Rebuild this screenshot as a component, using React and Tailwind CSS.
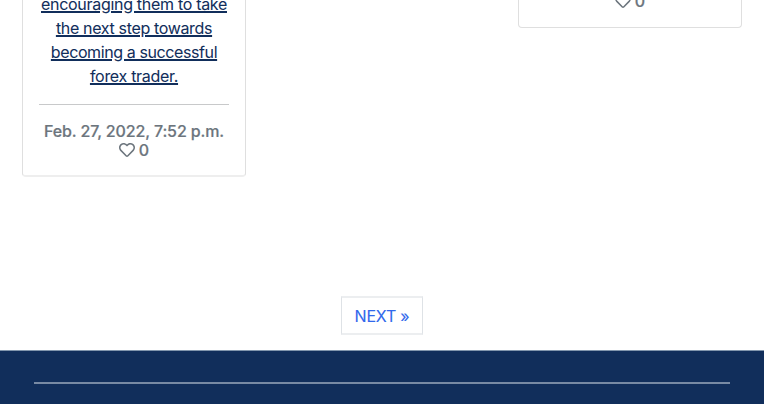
import { FaRegHeart } from "react-icons/fa";

function Likes() {
  return (
    <div className="flex h-[19px] items-center justify-center gap-1">
      <FaRegHeart className="mb-px size-4" />
      <span>0</span>
    </div>
  );
}

const excerpt = [
  { text: "encouraging them to take", spacing: "tracking-[-0.3px]" },
  { text: "the next step towards", spacing: "tracking-[-0.34px]" },
  { text: "becoming a successful", spacing: "tracking-[-0.4px]" },
  { text: "forex trader.", spacing: "tracking-[-0.3px]" },
];

export default function App() {
  return (
    <div className="flex h-[404px] w-[764px] flex-col overflow-hidden bg-white font-['Inter',sans-serif] text-base">
      <main className="flex h-[350px] shrink-0 flex-col items-center">
        <div className="flex h-[296px] w-full shrink-0 items-start justify-between px-[22px]">
          <article className="flex h-[177px] w-[224px] flex-col justify-end rounded-b border border-t-0 border-b-2 border-[#dfdfdf] border-b-[#eeeeee] px-4 pb-[15px] text-center">
            <p className="flex flex-col items-center leading-6 text-[#112e5b]">
              {excerpt.map((line) => (
                <span key={line.text} className={`whitespace-nowrap underline decoration-[1.5px] [-webkit-text-stroke:0.05px_currentColor] ${line.spacing}`}>
                  {line.text}
                </span>
              ))}
            </p>
            <hr className="mt-4 mb-[17px] border-[#c8c9ca]" />
            <div className="font-medium leading-[19px] text-[#6c757d] [-webkit-text-stroke:0.2px_currentColor]">
              <div className="whitespace-nowrap tracking-[-0.13px]">Feb. 27, 2022, 7:52 p.m.</div>
              <Likes />
            </div>
          </article>
          <article className="flex h-[28px] w-[224px] flex-col justify-end rounded-b border border-t-0 border-[#dfdfdf] px-4 pb-4 text-center font-medium leading-[19px] text-[#6c757d] [-webkit-text-stroke:0.2px_currentColor]">
            <Likes />
          </article>
        </div>
        <a className="flex h-[39px] w-[82px] items-center justify-center whitespace-nowrap border border-y-2 border-x-[#dee2e6] border-y-[#eceef0] text-[#3068ec] tracking-[-0.2px] [-webkit-text-stroke:0.1px_currentColor]">
          NEXT »
        </a>
      </main>
      <footer className="h-[54px] shrink-0 border-t border-[#8296ad] bg-[#112e5b] px-[34px] pt-[31px]">
        <hr className="border-t-2 border-[#788aa4]" />
      </footer>
    </div>
  );
}
